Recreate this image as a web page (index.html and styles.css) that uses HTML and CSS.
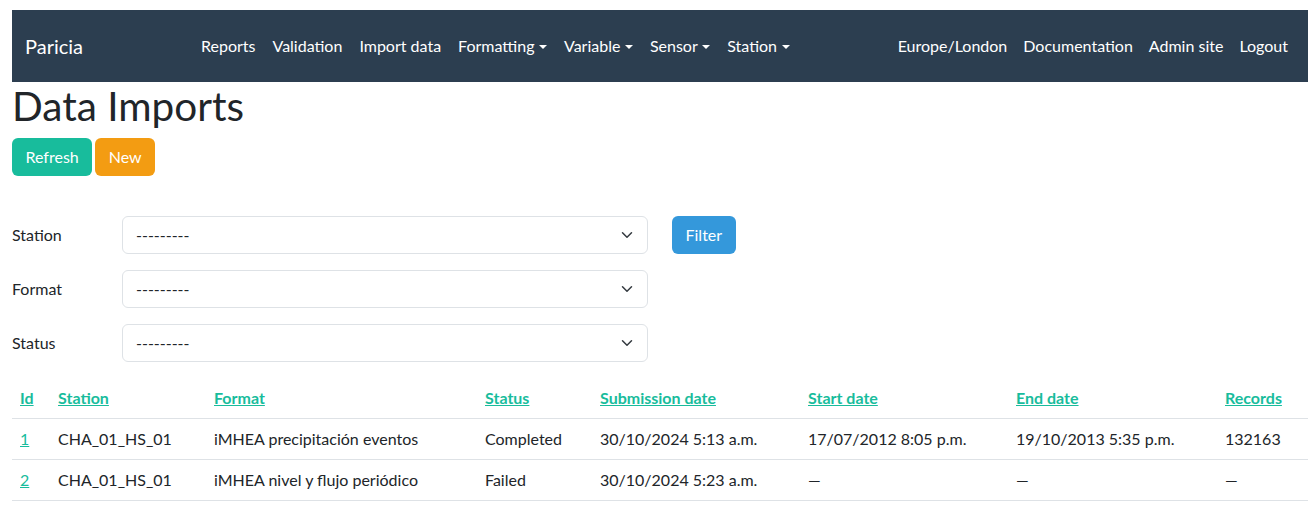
FILE: index.html
```html
<!DOCTYPE html>
<html lang="en">
<head>
<meta charset="utf-8">
<title>Data Imports</title>
<link rel="stylesheet" href="styles.css">
</head>
<body>
<div class="page">
  <nav class="navbar">
    <a class="brand" href="#">Paricia</a>
    <ul class="nav nav-main">
      <li><a href="#">Reports</a></li>
      <li><a href="#">Validation</a></li>
      <li><a href="#">Import data</a></li>
      <li><a href="#" class="dropdown">Formatting</a></li>
      <li><a href="#" class="dropdown">Variable</a></li>
      <li><a href="#" class="dropdown">Sensor</a></li>
      <li><a href="#" class="dropdown">Station</a></li>
    </ul>
    <ul class="nav nav-right">
      <li><a href="#">Europe/London</a></li>
      <li><a href="#">Documentation</a></li>
      <li><a href="#">Admin site</a></li>
      <li><a href="#">Logout</a></li>
    </ul>
  </nav>

  <h1 class="title">Data Imports</h1>
  <div class="actions">
    <button class="btn btn-success">Refresh</button>
    <button class="btn btn-warning">New</button>
  </div>

  <form class="filters">
    <div class="filter-row">
      <label class="filter-label">Station</label>
      <div class="select"><span>---------</span><svg class="chev" viewBox="0 0 16 16" width="12" height="12"><path d="M2 5l6 6 6-6" fill="none" stroke="#343a40" stroke-width="2" stroke-linecap="round" stroke-linejoin="round"/></svg></div>
      <button type="button" class="btn btn-info">Filter</button>
    </div>
    <div class="filter-row">
      <label class="filter-label">Format</label>
      <div class="select"><span>---------</span><svg class="chev" viewBox="0 0 16 16" width="12" height="12"><path d="M2 5l6 6 6-6" fill="none" stroke="#343a40" stroke-width="2" stroke-linecap="round" stroke-linejoin="round"/></svg></div>
    </div>
    <div class="filter-row">
      <label class="filter-label">Status</label>
      <div class="select"><span>---------</span><svg class="chev" viewBox="0 0 16 16" width="12" height="12"><path d="M2 5l6 6 6-6" fill="none" stroke="#343a40" stroke-width="2" stroke-linecap="round" stroke-linejoin="round"/></svg></div>
    </div>
  </form>

  <table class="table">
    <colgroup>
      <col class="c-id"><col class="c-station"><col class="c-format"><col class="c-status">
      <col class="c-sub"><col class="c-start"><col class="c-end"><col class="c-rec">
    </colgroup>
    <thead>
      <tr>
        <th><a href="#">Id</a></th>
        <th><a href="#">Station</a></th>
        <th><a href="#">Format</a></th>
        <th><a href="#">Status</a></th>
        <th><a href="#">Submission date</a></th>
        <th><a href="#">Start date</a></th>
        <th><a href="#">End date</a></th>
        <th><a href="#">Records</a></th>
      </tr>
    </thead>
    <tbody>
      <tr>
        <td><a href="#">1</a></td>
        <td>CHA_01_HS_01</td>
        <td>iMHEA precipitación eventos</td>
        <td>Completed</td>
        <td>30/10/2024 5:13 a.m.</td>
        <td>17/07/2012 8:05 p.m.</td>
        <td>19/10/2013 5:35 p.m.</td>
        <td>132163</td>
      </tr>
      <tr>
        <td><a href="#">2</a></td>
        <td>CHA_01_HS_01</td>
        <td>iMHEA nivel y flujo periódico</td>
        <td>Failed</td>
        <td>30/10/2024 5:23 a.m.</td>
        <td>—</td>
        <td>—</td>
        <td>—</td>
      </tr>
    </tbody>
  </table>
</div>
</body>
</html>
```

FILE: styles.css
```css
* { box-sizing: border-box; }
html, body { margin: 0; padding: 0; background: #fff; }
body {
  font-family: Lato, "Noto Sans", sans-serif;
  font-size: 16px;
  line-height: 1.5;
  color: #212529;
}
.page { padding: 10px 4px 0 12px; }

.navbar {
  display: flex;
  align-items: center;
  height: 72px;
  background: #2c3e50;
  padding: 0 12px 0 13px;
}
.brand {
  color: #fff;
  text-decoration: none;
  font-size: 20px;
  width: 167.5px;
}
.nav { list-style: none; margin: 0; padding: 0; display: flex; }
.nav a {
  display: block;
  color: #fff;
  text-decoration: none;
  padding: 8px 8px;
  line-height: 24px;
}
.nav-main a { padding: 8px 8.5px; }
.nav-right { margin-left: auto; }
.dropdown::after {
  content: "";
  display: inline-block;
  margin-left: 4.5px;
  vertical-align: 3px;
  border-top: 4.5px solid #fff;
  border-left: 4px solid transparent;
  border-right: 4px solid transparent;
}

.title {
  margin: 0 0 8px 0;
  font-size: 40.5px;
  font-weight: 400;
  line-height: 48px;
}
.actions { display: flex; gap: 3px; }
.btn {
  font-family: inherit;
  font-size: 16px;
  line-height: 24px;
  height: 38px;
  padding: 0 13.5px;
  border: 0;
  border-radius: 6px;
  color: #fff;
  cursor: pointer;
}
.btn-success { background: #18bc9c; }
.btn-warning { background: #f39c12; }
.btn-info { background: #3498db; margin-left: 24px; }

.filters {
  margin-top: 40px;
  display: flex;
  flex-direction: column;
  gap: 16px;
}
.filter-row { display: flex; align-items: center; }
.filter-label { width: 110px; }
.select {
  width: 526px;
  height: 38px;
  border: 1px solid #dee2e6;
  border-radius: 6px;
  display: flex;
  align-items: center;
  justify-content: space-between;
  padding: 0 14px 0 13px;
}
.chev { display: block; }

.table {
  margin-top: 16px;
  width: 1296px;
  border-collapse: collapse;
  table-layout: fixed;
}
.c-id { width: 38px; }
.c-station { width: 156px; }
.c-format { width: 271px; }
.c-status { width: 115px; }
.c-sub { width: 208px; }
.c-start { width: 208px; }
.c-end { width: 209px; }
.c-rec { width: 91px; }
.table th, .table td {
  text-align: left;
  padding: 8px 8px;
  line-height: 24px;
  border-bottom: 1px solid #dee2e6;
  white-space: nowrap;
}
.table th { font-weight: 700; }
.table a { color: #18bc9c; text-decoration: underline; }
```
